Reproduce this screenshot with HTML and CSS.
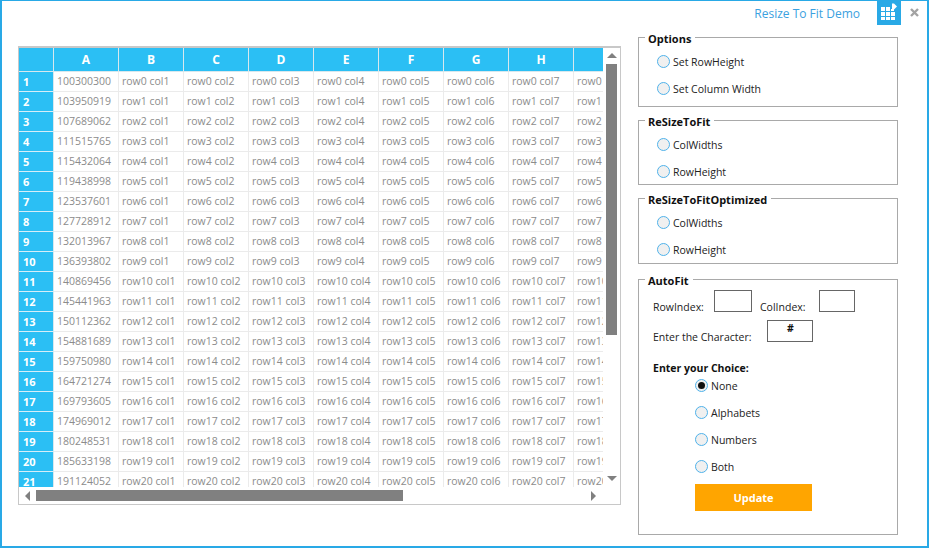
FILE: index.html
```html
<!DOCTYPE html>
<html lang="en">
<head>
<meta charset="utf-8">
<title>Resize To Fit Demo</title>
<link rel="stylesheet" href="styles.css">
</head>
<body>
<div class="window">
  <header class="titlebar">
    <span class="title">Resize To Fit Demo</span>
    <span class="appicon">
      <svg width="24" height="24" viewBox="0 0 24 24"><g fill="#fff"><rect x="4" y="6" width="4" height="4"/><rect x="9" y="6" width="4" height="4"/><rect x="14" y="8" width="3" height="2"/><rect x="4" y="11" width="4" height="4"/><rect x="9" y="11" width="4" height="4"/><rect x="14" y="11" width="4" height="4"/><rect x="4" y="16" width="4" height="3"/><rect x="9" y="16" width="4" height="3"/><rect x="14" y="16" width="4" height="3"/><polygon points="15,2.5 17,2.5 20,5.5 17,8.5 15,8.5"/></g></svg>
    </span>
    <span class="close">
      <svg width="9" height="9" viewBox="0 0 9 9"><path d="M1 1L8 8M8 1L1 8" stroke="#a3a3a3" stroke-width="2.4" fill="none"/></svg>
    </span>
  </header>
  <div class="content">
    <section class="grid">
      <div class="viewport">
        <table class="sheet">
          <thead><tr><th class="rh"></th><th>A</th><th>B</th><th>C</th><th>D</th><th>E</th><th>F</th><th>G</th><th>H</th><th></th></tr></thead>
          <tbody>
            <tr><th class="rh">1</th><td>100300300</td><td>row0 col1</td><td>row0 col2</td><td>row0 col3</td><td>row0 col4</td><td>row0 col5</td><td>row0 col6</td><td>row0 col7</td><td>row0 col8</td></tr>
            <tr><th class="rh">2</th><td>103950919</td><td>row1 col1</td><td>row1 col2</td><td>row1 col3</td><td>row1 col4</td><td>row1 col5</td><td>row1 col6</td><td>row1 col7</td><td>row1 col8</td></tr>
            <tr><th class="rh">3</th><td>107689062</td><td>row2 col1</td><td>row2 col2</td><td>row2 col3</td><td>row2 col4</td><td>row2 col5</td><td>row2 col6</td><td>row2 col7</td><td>row2 col8</td></tr>
            <tr><th class="rh">4</th><td>111515765</td><td>row3 col1</td><td>row3 col2</td><td>row3 col3</td><td>row3 col4</td><td>row3 col5</td><td>row3 col6</td><td>row3 col7</td><td>row3 col8</td></tr>
            <tr><th class="rh">5</th><td>115432064</td><td>row4 col1</td><td>row4 col2</td><td>row4 col3</td><td>row4 col4</td><td>row4 col5</td><td>row4 col6</td><td>row4 col7</td><td>row4 col8</td></tr>
            <tr><th class="rh">6</th><td>119438998</td><td>row5 col1</td><td>row5 col2</td><td>row5 col3</td><td>row5 col4</td><td>row5 col5</td><td>row5 col6</td><td>row5 col7</td><td>row5 col8</td></tr>
            <tr><th class="rh">7</th><td>123537601</td><td>row6 col1</td><td>row6 col2</td><td>row6 col3</td><td>row6 col4</td><td>row6 col5</td><td>row6 col6</td><td>row6 col7</td><td>row6 col8</td></tr>
            <tr><th class="rh">8</th><td>127728912</td><td>row7 col1</td><td>row7 col2</td><td>row7 col3</td><td>row7 col4</td><td>row7 col5</td><td>row7 col6</td><td>row7 col7</td><td>row7 col8</td></tr>
            <tr><th class="rh">9</th><td>132013967</td><td>row8 col1</td><td>row8 col2</td><td>row8 col3</td><td>row8 col4</td><td>row8 col5</td><td>row8 col6</td><td>row8 col7</td><td>row8 col8</td></tr>
            <tr><th class="rh">10</th><td>136393802</td><td>row9 col1</td><td>row9 col2</td><td>row9 col3</td><td>row9 col4</td><td>row9 col5</td><td>row9 col6</td><td>row9 col7</td><td>row9 col8</td></tr>
            <tr><th class="rh">11</th><td>140869456</td><td>row10 col1</td><td>row10 col2</td><td>row10 col3</td><td>row10 col4</td><td>row10 col5</td><td>row10 col6</td><td>row10 col7</td><td>row10 col8</td></tr>
            <tr><th class="rh">12</th><td>145441963</td><td>row11 col1</td><td>row11 col2</td><td>row11 col3</td><td>row11 col4</td><td>row11 col5</td><td>row11 col6</td><td>row11 col7</td><td>row11 col8</td></tr>
            <tr><th class="rh">13</th><td>150112362</td><td>row12 col1</td><td>row12 col2</td><td>row12 col3</td><td>row12 col4</td><td>row12 col5</td><td>row12 col6</td><td>row12 col7</td><td>row12 col8</td></tr>
            <tr><th class="rh">14</th><td>154881689</td><td>row13 col1</td><td>row13 col2</td><td>row13 col3</td><td>row13 col4</td><td>row13 col5</td><td>row13 col6</td><td>row13 col7</td><td>row13 col8</td></tr>
            <tr><th class="rh">15</th><td>159750980</td><td>row14 col1</td><td>row14 col2</td><td>row14 col3</td><td>row14 col4</td><td>row14 col5</td><td>row14 col6</td><td>row14 col7</td><td>row14 col8</td></tr>
            <tr><th class="rh">16</th><td>164721274</td><td>row15 col1</td><td>row15 col2</td><td>row15 col3</td><td>row15 col4</td><td>row15 col5</td><td>row15 col6</td><td>row15 col7</td><td>row15 col8</td></tr>
            <tr><th class="rh">17</th><td>169793605</td><td>row16 col1</td><td>row16 col2</td><td>row16 col3</td><td>row16 col4</td><td>row16 col5</td><td>row16 col6</td><td>row16 col7</td><td>row16 col8</td></tr>
            <tr><th class="rh">18</th><td>174969012</td><td>row17 col1</td><td>row17 col2</td><td>row17 col3</td><td>row17 col4</td><td>row17 col5</td><td>row17 col6</td><td>row17 col7</td><td>row17 col8</td></tr>
            <tr><th class="rh">19</th><td>180248531</td><td>row18 col1</td><td>row18 col2</td><td>row18 col3</td><td>row18 col4</td><td>row18 col5</td><td>row18 col6</td><td>row18 col7</td><td>row18 col8</td></tr>
            <tr><th class="rh">20</th><td>185633198</td><td>row19 col1</td><td>row19 col2</td><td>row19 col3</td><td>row19 col4</td><td>row19 col5</td><td>row19 col6</td><td>row19 col7</td><td>row19 col8</td></tr>
            <tr><th class="rh">21</th><td>191124052</td><td>row20 col1</td><td>row20 col2</td><td>row20 col3</td><td>row20 col4</td><td>row20 col5</td><td>row20 col6</td><td>row20 col7</td><td>row20 col8</td></tr>
          </tbody>
        </table>
      </div>
      <div class="vbar">
        <span class="arrow up"></span>
        <span class="vthumb"></span>
        <span class="arrow down"></span>
      </div>
      <div class="hbar">
        <span class="arrow left"></span>
        <span class="hthumb"></span>
        <span class="arrow right"></span>
      </div>
      <div class="corner"></div>
    </section>
    <aside class="side">
      <fieldset class="group group-options">
        <legend>Options</legend>
        <label class="radio"><span class="dot"></span>Set RowHeight</label>
        <label class="radio"><span class="dot"></span>Set Column Width</label>
      </fieldset>
      <fieldset class="group group-fit">
        <legend>ReSizeToFit</legend>
        <label class="radio"><span class="dot"></span>ColWidths</label>
        <label class="radio"><span class="dot"></span>RowHeight</label>
      </fieldset>
      <fieldset class="group group-opt">
        <legend>ReSizeToFitOptimized</legend>
        <label class="radio"><span class="dot"></span>ColWidths</label>
        <label class="radio"><span class="dot"></span>RowHeight</label>
      </fieldset>
      <fieldset class="group group-auto">
        <legend>AutoFit</legend>
        <div class="index-row">
          <span class="lbl-row">RowIndex:</span><span class="box box-row"></span>
          <span class="lbl-col">ColIndex:</span><span class="box box-col"></span>
        </div>
        <div class="char-row">
          <span>Enter the Character:</span><span class="box box-char">#</span>
        </div>
        <div class="choice-title">Enter your Choice:</div>
        <div class="choices">
          <label class="radio"><span class="dot on"></span>None</label>
          <label class="radio"><span class="dot"></span>Alphabets</label>
          <label class="radio"><span class="dot"></span>Numbers</label>
          <label class="radio"><span class="dot"></span>Both</label>
          <button class="update" type="button">Update</button>
        </div>
      </fieldset>
    </aside>
  </div>
</div>
</body>
</html>
```
FILE: styles.css
```css
* { box-sizing: border-box; }
html, body { margin: 0; padding: 0; }
body { width: 929px; height: 548px; overflow: hidden; background: #fff; font-family: "Open Sans", "Noto Sans", sans-serif; font-size: 10.5px; color: #222; }
.window { width: 929px; height: 548px; border: 2px solid #29a9e6; border-top-width: 1px; display: flex; flex-direction: column; background: #fff; }

.titlebar { height: 24px; display: flex; align-items: flex-start; justify-content: flex-end; }
.title { font-size: 12px; color: #3ba1e0; margin-top: 4px; margin-right: 17px; }
.appicon { width: 24px; height: 24px; background: #29a9e6; display: block; }
.appicon svg { display: block; }
.close { width: 24px; margin-left: 1px; margin-right: 1px; height: 24px; display: flex; align-items: center; justify-content: center; padding-bottom: 2px; }

.content { display: flex; align-items: flex-start; padding: 21px 0 0 16px; }

.grid { width: 603px; height: 459px; border: 1px solid #c8c8c8; border-top-width: 2px; display: grid; grid-template-columns: 584px 17px; grid-template-rows: 439px 17px; background: #fff; }
.viewport { overflow: hidden; }
.sheet { border-collapse: separate; border-spacing: 0; table-layout: fixed; width: 620px; }
.sheet th, .sheet td { width: 65px; height: 20px; padding: 0; white-space: nowrap; overflow: hidden; }
.sheet thead th { height: 24px; background: #2bbff4; color: #fff; font-weight: 700; font-size: 12px; text-align: center; border-right: 1px solid #d8e8ee; border-bottom: 1px solid #d8e8ee; }
.sheet thead th.rh, .sheet tbody th.rh { width: 35px; }
.sheet tbody th { background: #2bbff4; color: #fff; font-weight: 700; font-size: 11px; text-align: left; padding: 0 0 1px 4px; border-bottom: 1px solid #d6eef8; border-right: 1px solid #d8e8ee; }
.sheet td { color: #8c8c8c; padding: 0 0 1px 3px; border-bottom: 1px solid #ebebeb; border-right: 1px solid #ebebeb; }

.vbar { grid-column: 2; grid-row: 1; display: flex; flex-direction: column; align-items: center; padding: 5px 0 0; }
.vthumb { width: 11px; height: 271px; background: #808080; margin-top: 6px; }
.hbar { grid-column: 1; grid-row: 2; display: flex; align-items: center; padding-left: 6px; }
.hthumb { width: 367px; height: 11px; background: #808080; margin-left: 6px; }
.arrow { display: block; width: 0; height: 0; border-style: solid; border-color: transparent; }
.arrow.up { border-width: 0 5px 5px; border-bottom-color: #808080; }
.arrow.down { border-width: 5px 5px 0; border-top-color: #808080; margin-top: auto; margin-bottom: 6px; }
.arrow.left { border-width: 5px 5px 5px 0; border-right-color: #808080; }
.arrow.right { border-width: 5px 0 5px 5px; border-left-color: #808080; margin-left: auto; margin-right: 7px; }

.side { margin-left: 17px; margin-top: -17px; width: 260px; display: flex; flex-direction: column; }
.group { margin: 0; padding: 2px 0 0 18px; border: 1px solid #a9a9a9; min-width: 0; width: 260px; display: flex; flex-direction: column; }
.group legend { font-weight: 700; color: #111; font-size: 11px; line-height: 14px; padding: 3px 4px 0 3px; margin-left: -12px; }
.group-options { height: 78px; }
.group-fit { height: 73px; margin-top: 5px; }
.group-opt { height: 74px; margin-top: 5px; }
.group-auto { height: 264px; margin-top: 7px; padding: 0 0 0 14px; }
.group-auto legend { margin-left: -8px; }
.radio { display: flex; align-items: center; height: 27px; color: #222; font-size: 10.5px; flex: none; }
.dot { width: 13px; height: 13px; border: 1px solid #4fb2ea; border-radius: 50%; background: #f0f0f0; margin-right: 3px; flex: none; position: relative; }
.dot.on::after { content: ""; position: absolute; left: 2px; top: 2px; width: 7px; height: 7px; border-radius: 50%; background: #111; }

.index-row { display: flex; align-items: flex-start; height: 30px; margin-top: 2px; }
.index-row > span { display: block; }
.lbl-row { margin-top: 10px; width: 61px; }
.lbl-col { margin-top: 10px; margin-left: 8px; width: 59px; }
.box { display: block; height: 22px; border: 1px solid #666; background: #fff; flex: none; text-align: center; font-weight: 700; color: #111; line-height: 14px; }
.box-row { width: 38px; }
.box-col { width: 36px; }
.box-char { width: 46px; margin-left: 16px; }
.char-row { display: flex; align-items: flex-start; height: 30px; }
.char-row > span:first-child { margin-top: 10px; }
.choice-title { font-weight: 700; color: #111; margin-top: 11px; line-height: 14px; }
.choices { display: flex; flex-direction: column; padding-left: 42px; margin-top: -3px; }
.update { margin-top: 4px; width: 117px; height: 27px; border: 0; background: #ffa500; color: #fff; font-family: inherit; font-weight: 700; font-size: 11px; padding: 0; }
```
